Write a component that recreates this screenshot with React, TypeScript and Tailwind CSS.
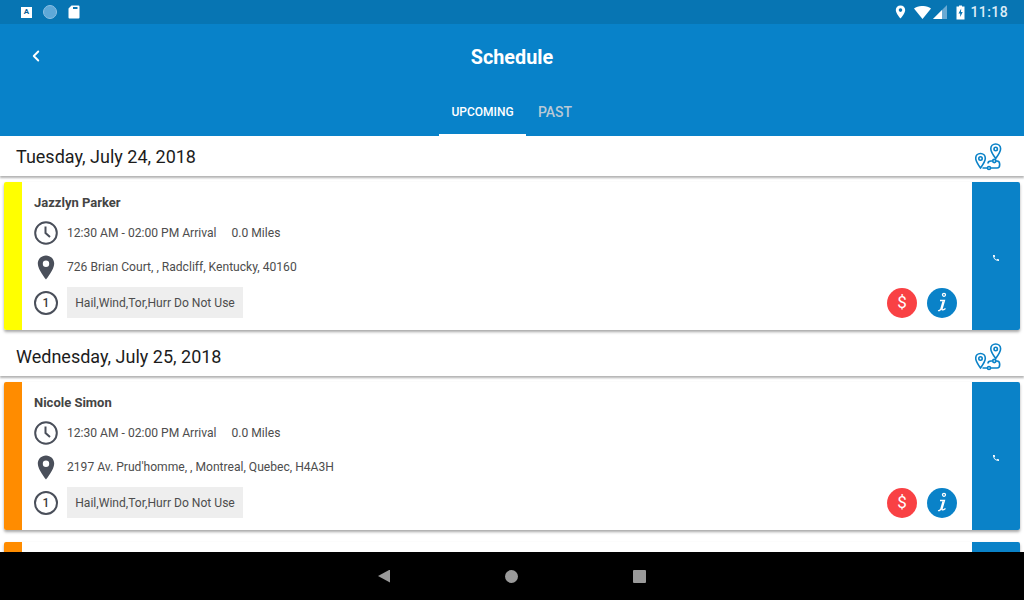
import { ChevronLeft } from 'lucide-react';

function RouteIcon() {
    return (
        <svg width="28" height="28" viewBox="0 0 28 28" fill="none" stroke="#0a82c8" strokeWidth="1.600">
            <path d="M20.700 1c-2.800 0-4.900 2.200-4.900 4.800 0 3.200 4.900 9.700 4.900 9.700s4.900-6.500 4.900-9.700C25.600 3.200 23.500 1 20.700 1z" />
            <circle cx="20.700" cy="6" r="1.700" />
            <path d="M5.500 10.500c-2.800 0-4.800 2.200-4.800 4.800 0 3.200 4.800 9.700 4.800 9.700s4.800-6.500 4.800-9.700c0-2.600-2-4.800-4.800-4.800z" />
            <circle cx="5.500" cy="15.500" r="1.700" />
            <path d="M7.500 25h5M15.500 25h6.500c3.600 0 3.600-7 0-7h-1M17.500 18h-1.500c-2.500 0-3 1.600-3 2.500" />
            <circle cx="14" cy="25" r="1.500" />
            <circle cx="19.300" cy="18" r="1.600" />
        </svg>
    );
}

function ClockIcon() {
    return (
        <svg width="24" height="24" viewBox="0 0 24 24" fill="none" stroke="#4a4f5a" strokeWidth="2">
            <circle cx="12" cy="12" r="10.800" />
            <path d="M11.500 5.500v6.500l4.500 4" />
        </svg>
    );
}

function PinIcon() {
    return (
        <svg width="18" height="25" viewBox="0 0 18 25">
            <path
                fillRule="evenodd"
                fill="#4a4f5a"
                d="M9 0.500C4.400 0.500 0.800 4.100 0.800 8.700 0.800 14.500 9 24.500 9 24.500s8.200-10 8.200-15.800C17.200 4.100 13.600 0.500 9 0.500zM9 5.600a3.200 3.200 0 1 1 0 6.400 3.200 3.200 0 0 1 0-6.400z"
            />
        </svg>
    );
}

function PhoneIcon() {
    return (
        <svg width="8" height="8" viewBox="0 0 24 24" fill="white">
            <path d="M6.600 10.800c1.400 2.800 3.800 5.100 6.600 6.600l2.200-2.200c.3-.3.700-.4 1-.2 1.100.4 2.300.6 3.600.6.600 0 1 .4 1 1V20c0 .6-.4 1-1 1C10.600 21 3 13.400 3 4c0-.6.400-1 1-1h3.500c.6 0 1 .4 1 1 0 1.300.2 2.500.6 3.600.1.300 0 .7-.2 1z" />
        </svg>
    );
}

function ScheduleCard({ name, address, stripe }: { name: string; address: string; stripe: string }) {
    return (
        <div className="mx-1 h-[148px] flex shrink-0 bg-white rounded-[2px] overflow-hidden shadow-[0_2px_3px_rgba(0,0,0,0.35)]">
            <div className={`w-[18px] shrink-0 ${stripe}`} />
            <div className="flex-1 bg-white pl-3 pr-[15px] flex flex-col">
                <p className="mt-[13px] h-[15px] leading-[15px] text-[13px] font-bold text-[#444444]">{name}</p>
                <div className="mt-[11px] h-[24px] flex items-center gap-[9px]">
                    <ClockIcon />
                    <span className="text-[12.100px] text-[#4d4d4d]">12:30 AM - 02:00 PM Arrival</span>
                    <span className="ml-[6px] text-[12.100px] text-[#4d4d4d]">0.0 Miles</span>
                </div>
                <div className="mt-[10px] h-[25px] flex items-center gap-[9px]">
                    <div className="w-[24px] flex justify-center"><PinIcon /></div>
                    <span className="text-[12.100px] text-[#4d4d4d]">{address}</span>
                </div>
                <div className="mt-[7px] h-[31px] flex items-center gap-[9px]">
                    <div className="w-[24px] h-[24px] rounded-full border-2 border-[#4a4f5a] flex items-center justify-center text-[12px] leading-none font-medium text-[#3c3c3c]">1</div>
                    <div className="h-[31px] w-[176px] bg-[#eeeeee] flex items-center justify-center pt-[1px] text-[12.100px] text-[#4d4d4d]">Hail,Wind,Tor,Hurr Do Not Use</div>
                    <div className="ml-auto flex gap-[10px]">
                        <div className="w-[30px] h-[30px] rounded-full bg-[#f94144] flex items-center justify-center text-white text-[17px]">$</div>
                        <div className="w-[30px] h-[30px] rounded-full bg-[#0a82c8] flex items-center justify-center">
                            <svg width="14" height="22" viewBox="0 0 14 22" fill="none" stroke="white" strokeWidth="1.300">
                                <circle cx="9" cy="2.800" r="1.500" />
                                <path d="M5 8.500h4.500L7 17c-.3 1.200.8 1.500 3.500-.5M3 18.500c1.500.5 2.500-.5 3-2l2-7" />
                            </svg>
                        </div>
                    </div>
                </div>
            </div>
            <div className="w-[48px] shrink-0 bg-[#0a82c8] flex items-center justify-center pt-[4px]">
                <PhoneIcon />
            </div>
        </div>
    );
}

function DateRow({ label }: { label: string }) {
    return (
        <div className="h-[40px] shrink-0 bg-white flex items-center justify-between pl-4 pr-[21px] shadow-[0_2px_2px_rgba(0,0,0,0.3)]">
            <span className="text-[18px] text-[#1c1c1c]">{label}</span>
            <div className="pt-[2px]"><RouteIcon /></div>
        </div>
    );
}

export default function App() {
    return (
        <div className="w-[1024px] h-[600px] overflow-hidden flex flex-col bg-white font-['Roboto',sans-serif]">
            {/* Status bar */}
            <div className="h-6 shrink-0 bg-[#0775b3] flex items-center pl-[21px] pr-4">
                <div className="w-[11px] h-[11px] bg-white flex items-center justify-center text-[8px] font-bold leading-none text-[#0a5f99]">A</div>
                <div className="ml-[11px] w-[14px] h-[14px] rounded-full bg-[#5ea8d8] border border-[#8cc0e4]" />
                <svg className="ml-[11px]" width="12" height="14" viewBox="0 0 12 14" fill="white">
                    <path d="M3.500 0.500H10.500a1 1 0 0 1 1 1v11a1 1 0 0 1-1 1h-9a1 1 0 0 1-1-1V3.500zM5 2v2h4.500V2z" fillRule="evenodd" />
                </svg>
                <div className="ml-auto flex items-center">
                    <svg width="11" height="14" viewBox="0 0 10 14">
                        <path fillRule="evenodd" fill="white" d="M5 0.500C2.300 0.500 0.300 2.500 0.300 5 0.300 8.500 5 13.500 5 13.500S9.700 8.500 9.700 5C9.700 2.500 7.700 0.500 5 0.500zM5 3.300a1.800 1.800 0 1 1 0 3.600 1.800 1.800 0 0 1 0-3.600z" />
                    </svg>
                    <svg className="ml-[8px]" width="17" height="13" viewBox="0 0 17 13" fill="white">
                        <path d="M0 2.600C4.500-.9 12.500-.9 17 2.600L8.500 13z" />
                    </svg>
                    <svg className="ml-[2px]" width="14" height="14" viewBox="0 0 14 14">
                        <path d="M14 0V14H0z" fill="#6aaad3" />
                        <path d="M9 5V14H0z" fill="white" />
                    </svg>
                    <svg className="ml-[9px]" width="9" height="15" viewBox="0 0 9 15">
                        <path fillRule="evenodd" fill="white" d="M3 0.500H6V1.500H8.500V14.500H0.500V1.500H3zM5.200 3.500L2.500 8.500H4.200V12L6.700 7H5z" />
                    </svg>
                    <span className="ml-[5px] text-[14px] font-medium tracking-[0.4px] text-[#dcecf6]">11:18</span>
                </div>
            </div>

            {/* Toolbar + tabs */}
            <div className="h-[112px] shrink-0 bg-[#0882c9] flex flex-col">
                <div className="h-[66px] shrink-0 relative flex items-center justify-center pt-[2px]">
                    <ChevronLeft className="absolute left-[27px] top-[23px] text-white" size={18} strokeWidth={2.500} />
                    <h1 className="text-[19.800px] font-bold text-white">Schedule</h1>
                </div>
                <div className="flex-1 flex justify-center items-stretch">
                    <div className="w-[87px] flex items-center justify-center border-b-2 border-white text-[12px] font-medium text-white pb-[1px]">UPCOMING</div>
                    <div className="w-[59px] flex items-center justify-center pr-[1px] text-[14px] font-medium text-[#b9c9d6] pb-[1px]">PAST</div>
                </div>
            </div>

            {/* List */}
            <div className="flex-1 min-h-0 overflow-hidden flex flex-col">
                <DateRow label="Tuesday, July 24, 2018" />
                <div className="h-[6px] shrink-0" />
                <ScheduleCard name="Jazzlyn Parker" address="726 Brian Court, , Radcliff, Kentucky, 40160" stripe="bg-[#ffff00]" />
                <div className="h-[6px] shrink-0" />
                <DateRow label="Wednesday, July 25, 2018" />
                <div className="h-[6px] shrink-0" />
                <ScheduleCard name="Nicole Simon" address="2197 Av. Prud'homme, , Montreal, Quebec, H4A3H" stripe="bg-[#ff8c00]" />
                <div className="h-[12px] shrink-0" />
                {/* next card, only its top edge is on screen */}
                <div className="mx-1 h-[148px] flex shrink-0 bg-white rounded-[2px] overflow-hidden shadow-[0_2px_3px_rgba(0,0,0,0.35)]">
                    <div className="w-[18px] shrink-0 bg-[#ff8c00]" />
                    <div className="flex-1" />
                    <div className="w-[48px] shrink-0 bg-[#0a82c8]" />
                </div>
            </div>

            {/* Nav bar */}
            <div className="h-12 shrink-0 bg-black flex items-center justify-center gap-[115px]">
                <div className="w-[12px] h-[13px] bg-[#9a9a9a] [clip-path:polygon(0_50%,100%_0,100%_100%)]" />
                <div className="w-[13px] h-[13px] rounded-full bg-[#9a9a9a]" />
                <div className="w-[13px] h-[13px] rounded-[1px] bg-[#9a9a9a]" />
            </div>
        </div>
    );
}
